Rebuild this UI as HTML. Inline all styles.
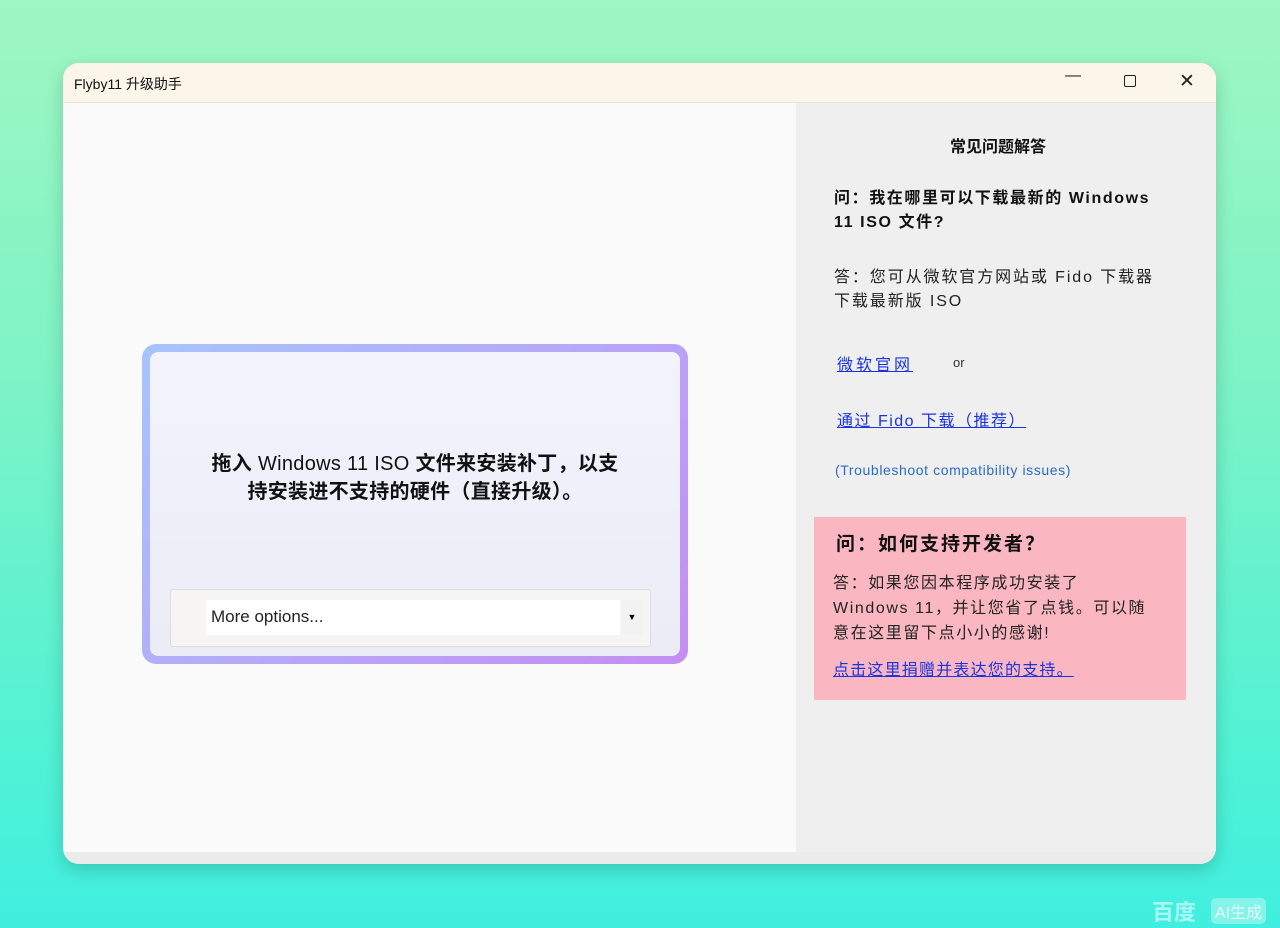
<!DOCTYPE html>
<html><head><meta charset="utf-8"><style>
*{margin:0;padding:0;box-sizing:border-box}
body{width:1280px;height:928px;overflow:hidden;position:relative;font-family:"Liberation Sans","Noto Sans CJK SC",sans-serif;
background:linear-gradient(180deg,#9ff7c2 0%,#7ef3c6 40%,#52f2d4 80%,#40efe0 100%);}
.win{position:absolute;left:63px;top:63px;width:1153px;height:801px;border-radius:16px;overflow:hidden;background:#f6f6f6;box-shadow:0 6px 18px rgba(0,0,0,.18)}
.title{position:absolute;left:0;top:0;width:100%;height:40px;background:#fcf5ea;border-bottom:1px solid #e8e4dc}
.title span{position:absolute;left:11px;top:11px;font-size:14px;color:#111}
.ctl{position:absolute;top:8px;font-size:16px;color:#222}
.left{position:absolute;left:0;top:40px;width:733px;height:749px;background:#fafafa}
.right{position:absolute;left:733px;top:40px;width:420px;height:749px;background:#efefef}
.bottom{position:absolute;left:0;top:789px;width:100%;height:12px;background:#ececec}
.box{position:absolute;left:79px;top:241px;width:546px;height:320px;border-radius:14px;padding:8px;background:linear-gradient(135deg,#a7c4fb,#b7a6f8 55%,#c58ef2)}
.inner{width:100%;height:100%;border-radius:8px;background:linear-gradient(180deg,#f3f3fd,#ececf7);position:relative}
.msg{position:absolute;left:0;width:100%;top:98px;text-align:center;font-size:20px;font-weight:bold;line-height:28px;color:#111;letter-spacing:0.3px}
.dd{position:absolute;left:20px;top:237px;width:481px;height:58px;background:#f7f5f3;border:1px solid #ddd;border-radius:3px}
.sel{position:absolute;left:35px;top:10px;width:414px;height:35px;background:#fff;font-size:17px;padding:7px 5px;color:#222}
.arr{position:absolute;left:451px;top:10px;width:20px;height:35px;background:#f2f2f2;font-size:9px;text-align:center;line-height:35px}
.r{position:absolute;color:#111;white-space:nowrap}
a{color:#1a33e0;text-decoration:underline}
.pink{position:absolute;left:751px;top:454px;width:372px;height:183px;background:#fbb7c1}
</style></head><body>
<div class="win">
<div class="title"><span>Flyby11 升级助手</span>
<div class="ctl" style="left:1002px;top:4px">—</div>
<div style="position:absolute;left:1061px;top:12px;width:12px;height:12px;border:1.5px solid #222;border-radius:2px"></div>
<div class="ctl" style="left:1116px;top:7px;font-size:19px">✕</div></div>
<div class="left">
<div class="box"><div class="inner">
<div class="msg">拖入 <span style="font-weight:normal">Windows 11 ISO</span> 文件来安装补丁，以支<br>持安装进不支持的硬件（直接升级）。</div>
<div class="dd"><div class="sel">More options...</div><div class="arr">▼</div></div>
</div></div>
</div>
<div class="right">
<div class="r" style="left:154px;top:30px;font-size:16px;font-weight:bold">常见问题解答</div>
<div class="r" style="left:38px;top:84px;font-size:16px;font-weight:bold;line-height:24px;letter-spacing:1.6px">问：我在哪里可以下载最新的 Windows<br>11 ISO 文件?</div>
<div class="r" style="left:38px;top:163px;font-size:16px;line-height:24px;color:#222;letter-spacing:1.9px">答：您可从微软官方网站或 Fido 下载器<br>下载最新版 ISO</div>
<div class="r" style="left:41px;top:248px;font-size:16px;letter-spacing:3px"><a>微软官网</a></div>
<div class="r" style="left:157px;top:252px;font-size:13px;color:#333">or</div>
<div class="r" style="left:41px;top:304px;font-size:16px;letter-spacing:1.5px"><a>通过 Fido 下载（推荐）</a></div>
<div class="r" style="left:39px;top:359px;font-size:14px;color:#2a6cc7;letter-spacing:0.6px">(Troubleshoot compatibility issues)</div>
</div>
<div class="pink">
<div class="r" style="left:22px;top:12px;font-size:19px;font-weight:bold;letter-spacing:2px">问：如何支持开发者？</div>
<div class="r" style="left:19px;top:54px;font-size:16px;line-height:25px;color:#222;letter-spacing:1.6px">答：如果您因本程序成功安装了<br>Windows 11，并让您省了点钱。可以随<br>意在这里留下点小小的感谢!</div>
<div class="r" style="left:19px;top:139px;font-size:16px;letter-spacing:1.2px"><a>点击这里捐赠并表达您的支持。</a></div>
</div>
<div class="bottom"></div>
</div>
<div style="position:absolute;left:1152px;top:895px;font-size:22px;font-weight:bold;color:rgba(255,255,255,.55)">百度</div>
<div style="position:absolute;left:1211px;top:898px;padding:1px 4px;border-radius:5px;background:rgba(255,255,255,.35);font-size:16px;color:rgba(255,255,255,.8)">AI生成</div>
</body></html>
